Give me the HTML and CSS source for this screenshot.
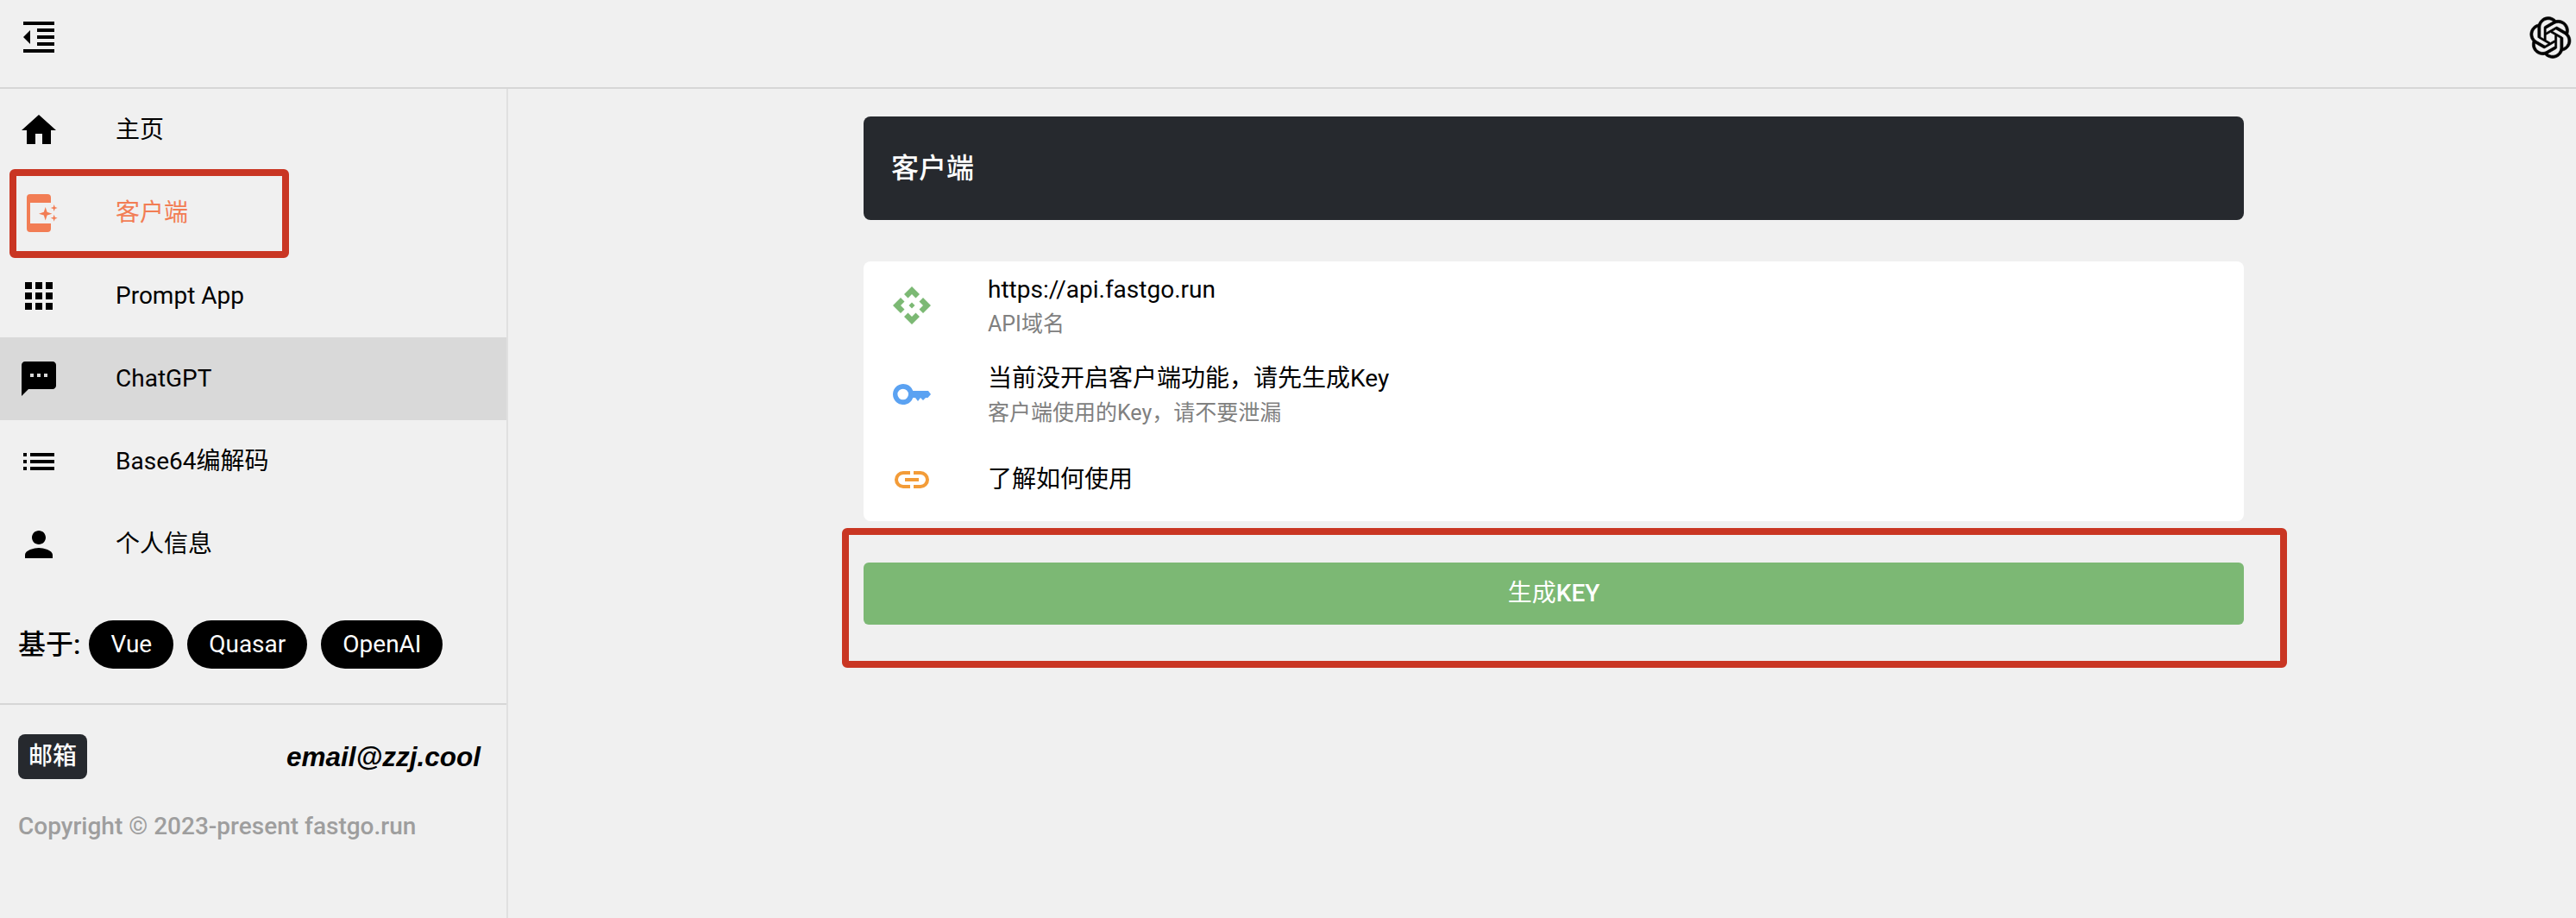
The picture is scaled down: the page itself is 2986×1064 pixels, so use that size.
FILE: index.html
```html
<!DOCTYPE html>
<html lang="zh-CN">
<head>
<meta charset="utf-8">
<title>客户端</title>
<link rel="stylesheet" href="styles.css">
</head>
<body>
<header class="topbar">
  <svg class="icon menu-btn" viewBox="0 0 24 24"><path d="M11 17h10v-2H11v2zm-8-5l4 4V8l-4 4zm0 9h18v-2H3v2zM3 3v2h18V3H3zm8 6h10V7H11v2zm0 4h10v-2H11v2z"/></svg>
  <svg class="logo" viewBox="0 0 41 41"><path d="M37.5324 16.8707C37.9808 15.5241 38.1363 14.0974 37.9886 12.6859C37.8409 11.2744 37.3934 9.91076 36.676 8.68622C35.6126 6.83404 33.9882 5.3676 32.0373 4.4985C30.0864 3.62941 27.9098 3.40259 25.8215 3.85078C24.8796 2.7893 23.7219 1.94125 22.4257 1.36341C21.1295 0.785575 19.7249 0.491269 18.3058 0.500197C16.1708 0.495044 14.0893 1.16803 12.3614 2.42214C10.6335 3.67624 9.34853 5.44666 8.6917 7.47815C7.30085 7.76286 5.98686 8.3414 4.8377 9.17505C3.68854 10.0087 2.73073 11.0782 2.02839 12.312C0.956464 14.1591 0.498905 16.2988 0.721698 18.4228C0.944492 20.5467 1.83612 22.5449 3.268 24.1293C2.81966 25.4759 2.66413 26.9026 2.81182 28.3141C2.95951 29.7256 3.40701 31.0892 4.12437 32.3138C5.18791 34.1659 6.8123 35.6322 8.76321 36.5013C10.7141 37.3704 12.8907 37.5973 14.9789 37.1492C15.9208 38.2107 17.0786 39.0587 18.3747 39.6366C19.6709 40.2144 21.0755 40.5087 22.4946 40.4998C24.6307 40.5054 26.7133 39.8321 28.4418 38.5772C30.1704 37.3223 31.4556 35.5506 32.1119 33.5179C33.5027 33.2332 34.8167 32.6547 35.9659 31.821C37.115 30.9874 38.0728 29.9178 38.7752 28.684C39.8458 26.8371 40.3023 24.6979 40.0789 22.5748C39.8556 20.4517 38.9639 18.4544 37.5324 16.8707ZM22.4978 37.8849C20.7443 37.8874 19.0459 37.2733 17.6994 36.1501C17.7601 36.117 17.8666 36.0586 17.936 36.0161L25.9004 31.4156C26.1003 31.3019 26.2663 31.137 26.3813 30.9378C26.4964 30.7386 26.5563 30.5124 26.5549 30.2825V19.0542L29.9213 20.998C29.9389 21.0068 29.9541 21.0198 29.9656 21.0359C29.977 21.052 29.9842 21.0707 29.9867 21.0902V30.3889C29.9842 32.375 29.1946 34.2791 27.7909 35.6841C26.3872 37.0892 24.4838 37.8806 22.4978 37.8849ZM6.39227 31.0064C5.51397 29.4888 5.19742 27.7107 5.49804 25.9832C5.55718 26.0187 5.66048 26.0818 5.73461 26.1244L13.699 30.7248C13.8975 30.8408 14.1233 30.902 14.3532 30.902C14.583 30.902 14.8088 30.8408 15.0073 30.7248L24.731 25.1103V28.9979C24.7321 29.0177 24.7283 29.0376 24.7199 29.0556C24.7115 29.0736 24.6988 29.0893 24.6829 29.1012L16.6317 33.7497C14.9096 34.7416 12.8643 35.0097 10.9447 34.4954C9.02506 33.9811 7.38785 32.7263 6.39227 31.0064ZM4.29707 13.6194C5.17156 12.0998 6.55279 10.9364 8.19885 10.3327C8.19885 10.4013 8.19491 10.5228 8.19491 10.6071V19.808C8.19351 20.0378 8.25334 20.2638 8.36823 20.4629C8.48312 20.6619 8.64893 20.8267 8.84863 20.9404L18.5723 26.5542L15.206 28.4979C15.1894 28.5089 15.1703 28.5155 15.1505 28.5173C15.1307 28.5191 15.1107 28.516 15.0924 28.5082L7.04046 23.8557C5.32135 22.8601 4.06716 21.2235 3.55289 19.3046C3.03862 17.3858 3.30624 15.3413 4.29707 13.6194ZM31.955 20.0556L22.2312 14.4411L25.5976 12.4981C25.6142 12.4872 25.6333 12.4805 25.6531 12.4787C25.6729 12.4769 25.6928 12.4801 25.7111 12.4879L33.7631 17.1364C34.9967 17.849 36.0017 18.8982 36.6606 20.1613C37.3194 21.4244 37.6047 22.849 37.4832 24.2684C37.3617 25.6878 36.8382 27.0432 35.9743 28.1759C35.1103 29.3086 33.9415 30.1717 32.6047 30.6641C32.6047 30.5947 32.6047 30.4733 32.6047 30.3889V21.188C32.6066 20.9586 32.5474 20.7328 32.4332 20.5338C32.319 20.3348 32.154 20.1698 31.955 20.0556ZM35.3055 15.0128C35.2464 14.9765 35.1431 14.9142 35.069 14.8717L27.1045 10.2712C26.906 10.1554 26.6803 10.0943 26.4504 10.0943C26.2206 10.0943 25.9948 10.1554 25.7963 10.2712L16.0726 15.8858V11.9982C16.0715 11.9783 16.0753 11.9585 16.0837 11.9405C16.0921 11.9225 16.1048 11.9068 16.1207 11.8949L24.1719 7.25025C25.4053 6.53903 26.8158 6.19376 28.2383 6.25482C29.6608 6.31589 31.0364 6.78077 32.2044 7.59508C33.3723 8.40939 34.2842 9.53945 34.8334 10.8531C35.3826 12.1667 35.5464 13.6095 35.3055 15.0128ZM14.2424 21.9419L10.8752 19.9981C10.8576 19.9893 10.8423 19.9763 10.8309 19.9602C10.8195 19.9441 10.8122 19.9254 10.8098 19.9058V10.6071C10.8107 9.18295 11.2173 7.78848 11.9819 6.58696C12.7466 5.38544 13.8377 4.42659 15.1275 3.82264C16.4173 3.21869 17.8524 2.99464 19.2649 3.1767C20.6775 3.35876 22.0089 3.93941 23.1034 4.85067C23.0427 4.88379 22.937 4.94215 22.8668 4.98473L14.9024 9.58517C14.7025 9.69878 14.5366 9.86356 14.4215 10.0626C14.3065 10.2616 14.2466 10.4877 14.2479 10.7175L14.2424 21.9419ZM16.071 17.9991L20.4018 15.4978L24.7325 17.9975V22.9985L20.4018 25.4983L16.071 22.9985V17.9991Z"/></svg>
</header>
<div class="layout">
  <aside class="sidebar">
    <nav class="nav">
      <a class="nav-item"><svg class="icon" viewBox="0 0 24 24"><path d="M10 20v-6h4v6h5v-8h3L12 3 2 12h3v8z"/></svg><span>主页</span></a>
      <a class="nav-item is-current">
        <svg class="icon" viewBox="0 0 48 48"><path d="M14 2h20a4 4 0 0 1 4 4v6h-24v24h24v6a4 4 0 0 1-4 4H14a4 4 0 0 1-4-4V6a4 4 0 0 1 4-4z"/><path d="M31.700 17l1.900 5.800 5.800 1.900-5.800 1.900-1.900 5.800-1.900-5.800-5.800-1.900 5.800-1.900zM41.700 14l1 3 3 1-3 1-1 3-1-3-3-1 3-1zM41.700 25.700l1 3 3 1-3 1-1 3-1-3-3-1 3-1z"/></svg>
        <span>客户端</span></a>
      <a class="nav-item"><svg class="icon" viewBox="0 0 24 24"><path d="M4 8h4V4H4v4zm6 12h4v-4h-4v4zm-6 0h4v-4H4v4zm0-6h4v-4H4v4zm6 0h4v-4h-4v4zm6-10v4h4V4h-4zm-6 4h4V4h-4v4zm6 6h4v-4h-4v4zm0 6h4v-4h-4v4z"/></svg><span>Prompt App</span></a>
      <a class="nav-item is-hover"><svg class="icon" viewBox="0 0 24 24"><path d="M20 2H4c-1.100 0-1.990.9-1.990 2L2 22l4-4h14c1.100 0 2-.9 2-2V4c0-1.100-.9-2-2-2zM9 11H7V9h2v2zm4 0h-2V9h2v2zm4 0h-2V9h2v2z"/></svg><span>ChatGPT</span></a>
      <a class="nav-item"><svg class="icon" viewBox="0 0 24 24"><path d="M3 13h2v-2H3v2zm0 4h2v-2H3v2zm0-8h2V7H3v2zm4 4h14v-2H7v2zm0 4h14v-2H7v2zM7 7v2h14V7H7z"/></svg><span>Base64编解码</span></a>
      <a class="nav-item"><svg class="icon" viewBox="0 0 24 24"><path d="M12 12c2.210 0 4-1.790 4-4s-1.790-4-4-4-4 1.790-4 4 1.790 4 4 4zm0 2c-2.670 0-8 1.340-8 4v2h16v-2c0-2.660-5.330-4-8-4z"/></svg><span>个人信息</span></a>
    </nav>
    <div class="built">
      <span class="built-label">基于:</span>
      <span class="chip">Vue</span>
      <span class="chip">Quasar</span>
      <span class="chip">OpenAI</span>
    </div>
    <div class="foot">
      <div class="mail-row">
        <span class="badge">邮箱</span>
        <span class="mail">email@zzj.cool</span>
      </div>
      <div class="copy">Copyright © 2023-present fastgo.run</div>
    </div>
  </aside>
  <main class="main">
    <div class="column">
      <div class="title-bar">客户端</div>
      <div class="card">
        <div class="row">
          <div class="row-icon"><svg class="icon-lg" viewBox="-24 -24 48 48" fill="#7cb974"><path d="M0-22L9-13 4.500-8.500 0-13-4.500-8.500-9-13z"/><path d="M22 0L13 9 8.500 4.500 13 0 8.500-4.500 13-9z"/><path d="M0 22L-9 13-4.500 8.500 0 13 4.500 8.500 9 13z"/><path d="M-22 0L-13-9-8.500-4.500-13 0-8.500 4.500-13 9z"/><path d="M0-3.500L3.500 0 0 3.500-3.500 0z"/></svg></div>
          <div class="row-text"><div class="row-label">https://api.fastgo.run</div><div class="row-sub">API域名</div></div>
        </div>
        <div class="row">
          <div class="row-icon"><svg class="icon-lg" viewBox="0 0 48 48"><path fill="#5ba2f2" fill-rule="evenodd" d="M25.300 20H43l3 4-3.500 4H40l-3 3-3-3-3 4-3-4h-2.700A12 12 0 1 1 25.300 20zM13.700 17.700a6.300 6.300 0 1 0 0 12.600 6.300 6.300 0 0 0 0-12.600z"/></svg></div>
          <div class="row-text"><div class="row-label">当前没开启客户端功能，请先生成Key</div><div class="row-sub">客户端使用的Key，请不要泄漏</div></div>
        </div>
        <div class="row row-single">
          <div class="row-icon"><svg class="icon-lg" viewBox="0 0 48 48" fill="none" stroke="#f39c38" stroke-width="4"><path d="M22 16h-8a8 8 0 0 0 0 16h8M26 16h8a8 8 0 0 1 0 16h-8M16 24h16"/></svg></div>
          <div class="row-text"><div class="row-label">了解如何使用</div></div>
        </div>
      </div>
      <button class="gen-btn" type="button"><span class="gen-cjk">生成</span>KEY</button>
    </div>
  </main>
</div>
<div class="mark mark-nav"></div>
<div class="mark mark-btn"></div>
</body>
</html>
```
FILE: styles.css
```css
* { box-sizing: border-box; }
html, body { height: 100%; }
body {
  margin: 0;
  background: #f0f0f0;
  color: #000;
  font-family: Roboto, "Noto Sans CJK SC", sans-serif;
  font-size: 28px;
  line-height: 42px;
  overflow: hidden;
}
.topbar {
  height: 103px;
  border-bottom: 2px solid #d6d6d6;
  padding: 19px 5px 0 21px;
  display: flex;
  justify-content: space-between;
  align-items: flex-start;
}
.icon { width: 48px; height: 48px; flex: none; fill: currentColor; display: block; }
.logo { width: 49px; height: 49px; display: block; stroke: #000; stroke-width: 0.5; }
.layout { display: flex; height: 961px; }
.sidebar {
  width: 589px;
  flex: none;
  border-right: 2px solid #e0e0e0;
  display: flex;
  flex-direction: column;
}
.nav-item {
  height: 96px;
  padding-left: 21px;
  display: flex;
  align-items: center;
  gap: 65px;
}
.is-current { color: #f27d54; }
.is-hover { background: #d9d9d9; }
.built {
  margin-top: 40px;
  height: 56px;
  padding-left: 21px;
  display: flex;
  align-items: center;
}
.built-label { font-size: 32px; font-weight: 500; margin-right: 10px; }
.chip {
  height: 56px;
  padding: 0 25px;
  margin-right: 16px;
  border-radius: 28px;
  background: #000;
  color: #fff;
  display: flex;
  align-items: center;
}
.foot { margin-top: 40px; border-top: 2px solid #d6d6d6; padding: 34px 30px 0 21px; }
.mail-row { display: flex; justify-content: space-between; align-items: center; height: 52px; }
.badge {
  height: 52px;
  padding: 0 12px;
  border-radius: 8px;
  background: #26292e;
  color: #fff;
  font-weight: 500;
  display: flex;
  align-items: center;
}
.mail { font-size: 31.5px; font-weight: 700; font-style: italic; font-family: "Liberation Sans", sans-serif; }
.copy { margin-top: 34px; color: #9e9e9e; font-weight: 500; white-space: nowrap; }
.main { flex: 1; padding: 32px 0 0 412px; }
.column { width: 1600px; }
.title-bar {
  height: 120px;
  padding-left: 32px;
  border-radius: 8px;
  background: #26292e;
  color: #fff;
  font-size: 32px;
  font-weight: 500;
  display: flex;
  align-items: center;
}
.card { margin-top: 48px; height: 301px; background: #fff; border-radius: 8px; }
.row { height: 102.5px; padding-left: 32px; display: flex; align-items: center; }
.row-single { height: 96px; }
.row-icon { width: 112px; flex: none; }
.icon-lg { width: 48px; height: 48px; display: block; }
.row-sub { margin-top: 2px; font-size: 25px; line-height: 34px; color: #808080; }
.gen-btn {
  display: block;
  width: 100%;
  height: 72px;
  margin-top: 48px;
  border: 0;
  border-radius: 6px;
  background: #7cb874;
  color: #fff;
  font: 500 28px/42px Roboto, "Noto Sans CJK SC", sans-serif;
}
.gen-cjk { font-weight: 400; }
.mark { position: absolute; border: 8px solid #c93623; border-radius: 6px; }
.mark-nav { left: 11px; top: 196px; width: 324px; height: 103px; }
.mark-btn { left: 976px; top: 612px; width: 1675px; height: 162px; }
```
